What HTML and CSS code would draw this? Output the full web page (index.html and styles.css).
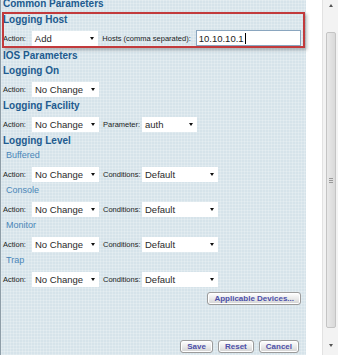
FILE: index.html
```html
<!DOCTYPE html>
<html lang="en">
<head>
    <meta charset="UTF-8">
    <title>Common Parameters</title>
    <link rel="stylesheet" href="styles.css">
</head>
<body>
    <div class="panel">
        <h2 class="section top">Common Parameters</h2>

        <div class="highlight">
            <h3 class="section">Logging Host</h3>
            <div class="row">
                <span class="label">Action:</span>
                <div class="select w-action">Add<span class="arrow"></span></div>
                <span class="label wide">Hosts (comma separated):</span>
                <div class="textbox">10.10.10.1<span class="caret"></span></div>
            </div>
        </div>

        <h2 class="section">IOS Parameters</h2>
        <h3 class="section">Logging On</h3>
        <div class="row">
            <span class="label">Action:</span>
            <div class="select w-action">No Change<span class="arrow"></span></div>
        </div>

        <h3 class="section">Logging Facility</h3>
        <div class="row">
            <span class="label">Action:</span>
            <div class="select w-action">No Change<span class="arrow"></span></div>
            <span class="label second">Parameter:</span>
            <div class="select w-param">auth<span class="arrow"></span></div>
        </div>

        <h3 class="section">Logging Level</h3>
        <div class="sub">Buffered</div>
        <div class="row">
            <span class="label">Action:</span>
            <div class="select w-action">No Change<span class="arrow"></span></div>
            <span class="label second">Conditions:</span>
            <div class="select w-cond">Default<span class="arrow"></span></div>
        </div>
        <div class="sub">Console</div>
        <div class="row">
            <span class="label">Action:</span>
            <div class="select w-action">No Change<span class="arrow"></span></div>
            <span class="label second">Conditions:</span>
            <div class="select w-cond">Default<span class="arrow"></span></div>
        </div>
        <div class="sub">Monitor</div>
        <div class="row">
            <span class="label">Action:</span>
            <div class="select w-action">No Change<span class="arrow"></span></div>
            <span class="label second">Conditions:</span>
            <div class="select w-cond">Default<span class="arrow"></span></div>
        </div>
        <div class="sub">Trap</div>
        <div class="row">
            <span class="label">Action:</span>
            <div class="select w-action">No Change<span class="arrow"></span></div>
            <span class="label second">Conditions:</span>
            <div class="select w-cond">Default<span class="arrow"></span></div>
        </div>

        <div class="actions">
            <button type="button" class="btn">Applicable Devices...</button>
        </div>

        <div class="footer">
            <button type="button" class="btn">Save</button>
            <button type="button" class="btn">Reset</button>
            <button type="button" class="btn">Cancel</button>
        </div>
    </div>

    <div class="gap"></div>

    <div class="scrollbar">
        <span class="scroll-arrow up"></span>
        <div class="thumb"><span class="grip"></span></div>
        <span class="scroll-arrow down"></span>
    </div>
</body>
</html>
```

FILE: styles.css
```css
body {
    font-family: "Liberation Sans", Arial, sans-serif;
    margin: 0;
    padding: 0;
    display: flex;
    height: 355px;
    overflow: hidden;
    background: #fff;
}
.panel {
    width: 306px;
    box-sizing: border-box;
    border-left: 1px solid #8f9ea8;
    padding: 0 5px 0 2px;
    background-color: #d6e3ea;
    background-image:
        linear-gradient(rgba(255, 255, 255, 0.2) 1px, transparent 1px),
        linear-gradient(90deg, rgba(255, 255, 255, 0.2) 1px, transparent 1px);
    background-size: 3px 3px;
}
.section {
    margin: 0;
    font-size: 10px;
    font-weight: bold;
    line-height: 15px;
    color: #215b8f;
    white-space: nowrap;
}
.section.top {
    margin-top: -3px;
    line-height: 14px;
}
.highlight {
    position: relative;
    margin-top: 1px;
    padding-bottom: 1px;
}
.highlight::after {
    content: "";
    position: absolute;
    top: 0;
    bottom: 0;
    left: -1px;
    right: -4px;
    border: 2px solid #c23a3c;
    box-shadow: 2px 2px 3px rgba(0, 0, 0, 0.25);
    pointer-events: none;
}
.sub {
    font-size: 9px;
    line-height: 15px;
    color: #4a86b8;
    padding-left: 3px;
}
.row {
    display: flex;
    align-items: center;
    height: 18px;
    padding-top: 2px;
}
.label {
    width: 29px;
    font-size: 7.5px;
    color: #1c1c1c;
    white-space: nowrap;
}
.label.second {
    width: 39px;
    margin-left: 4px;
}
.label.wide {
    width: 94px;
    margin-left: 4px;
}
.select {
    position: relative;
    height: 15px;
    line-height: 15px;
    box-sizing: border-box;
    padding-left: 3px;
    background: #fff;
    font-size: 9.5px;
    color: #2a2a2a;
    white-space: nowrap;
}
.w-action { width: 67px; }
.w-param { width: 55px; }
.w-cond { width: 76px; }
.arrow {
    position: absolute;
    right: 4px;
    top: 6px;
    border-left: 2.5px solid transparent;
    border-right: 2.5px solid transparent;
    border-top: 3px solid #111;
}
.textbox {
    display: flex;
    align-items: center;
    width: 106px;
    height: 16px;
    box-sizing: border-box;
    border: 1px solid #8aa6bf;
    padding-left: 2px;
    background: #fff;
    font-size: 9.5px;
    color: #222;
}
.caret {
    width: 1px;
    height: 11px;
    margin-left: 1px;
    background: #000;
}
.actions {
    display: flex;
    justify-content: flex-end;
    margin-top: 4px;
}
.footer {
    display: flex;
    justify-content: flex-end;
    gap: 5px;
    margin-top: 35px;
    margin-right: 2px;
}
.btn {
    height: 13px;
    padding: 0 6px;
    border: 1px solid #9b9b9b;
    border-radius: 3px;
    background: linear-gradient(#ffffff, #e6e6e6 60%, #d2d2d2);
    box-shadow: inset 0 0 0 1px #fff;
    font-family: "Liberation Sans", Arial, sans-serif;
    font-size: 8px;
    font-weight: bold;
    line-height: 11px;
    color: #4c4fa8;
    cursor: pointer;
}
.gap {
    width: 16px;
    background: #fff;
}
.scrollbar {
    width: 16px;
    box-sizing: border-box;
    border-left: 1px solid #e2e2e2;
    background: #f3f3f3;
    display: flex;
    flex-direction: column;
    align-items: center;
}
.scroll-arrow {
    width: 0;
    height: 0;
    border-left: 2.5px solid transparent;
    border-right: 2.5px solid transparent;
}
.scroll-arrow.up {
    margin-top: 4px;
    border-bottom: 3px solid #555;
}
.scroll-arrow.down {
    margin-top: 16px;
    border-top: 3px solid #555;
}
.thumb {
    width: 10px;
    height: 296px;
    margin-top: 25px;
    box-sizing: border-box;
    border: 1px solid #c4c4c4;
    border-radius: 2px;
    background: linear-gradient(90deg, #e9e9e9, #d9d9d9);
    display: flex;
    align-items: center;
    justify-content: center;
}
.grip {
    width: 4px;
    height: 5px;
    background: repeating-linear-gradient(#999 0 1px, transparent 1px 2px);
}
```
